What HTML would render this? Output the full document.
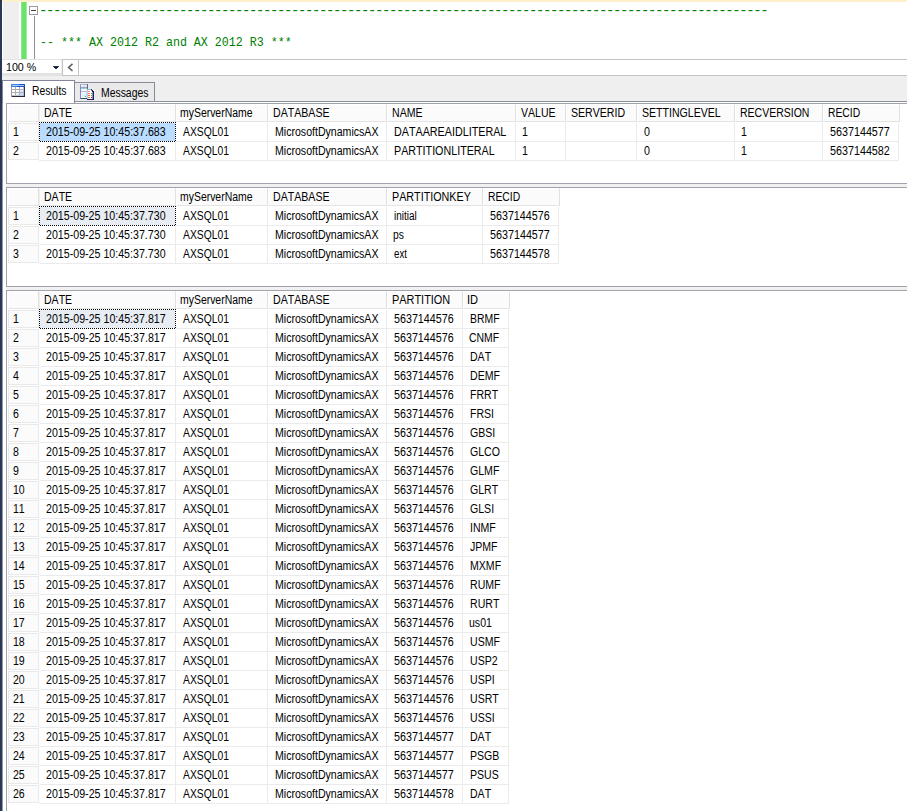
<!DOCTYPE html>
<html><head><meta charset="utf-8"><title>Results</title><style>

html,body{margin:0;padding:0;}
body{width:907px;height:811px;overflow:hidden;background:#fff;position:relative;font-family:"Liberation Sans",sans-serif;font-size:11px;color:#000;}
div{position:absolute;box-sizing:border-box;}
.t{white-space:pre;font-size:12px;line-height:14px;height:14px;font-kerning:none;transform-origin:0 0;}
.h{background:#fbfbfb;border-right:1px solid #dfdfdf;border-bottom:1px solid #e4e4e4;border-top:1px solid #fff;border-left:1px solid #fff;}
.c{border-right:1px solid #ebebeb;border-bottom:1px solid #ebebeb;}
.rh{background:#fbfbfb;border:1px solid #e9e9e9;}
.mono{font-family:"Liberation Mono",monospace;font-size:12.2px;color:#008000;white-space:pre;line-height:15px;transform-origin:0 0;transform:scaleX(0.9563);}

</style></head><body>
<div style="left:0;top:0;width:2px;height:811px;background:#293955"></div>
<div style="left:2px;top:0;width:905px;height:2px;background:#fff0cc"></div>
<div style="left:3px;top:2px;width:16px;height:57px;background:#efefef"></div>
<div style="left:21px;top:2px;width:6px;height:57px;background:#6be36b;border-left:1px solid #8ae98a;border-right:1px solid #9aec9a"></div>
<div style="left:29px;top:6px;width:9px;height:9px;border:1px solid #9a9a9a;background:#fff"></div>
<div style="left:31px;top:10px;width:5px;height:1px;background:#444"></div>
<div style="left:34px;top:16px;width:1px;height:43px;background:#909090"></div>
<div class="mono" style="left:39px;top:4px;font-size:14px;letter-spacing:-1.4px;transform:none">--------------------------------------------------------------------------------------------------------</div>
<div class="mono" style="left:39.5px;top:36px">-- *** AX 2012 R2 and AX 2012 R3 ***</div>
<div style="left:2px;top:59px;width:905px;height:1px;background:#e4e4e4"></div>
<div style="left:2px;top:60px;width:60px;height:13px;background:#fff"></div>
<div class="t" style="left:5.5px;top:60px;font-size:11px;line-height:14px;transform:scaleX(0.97)">100 %</div>
<div style="left:53px;top:66px;width:6px;height:1px;background:#2a3552"></div><div style="left:54px;top:67px;width:4px;height:1px;background:#0e1a38"></div><div style="left:55px;top:68px;width:2px;height:1px;background:#27324f"></div>
<div style="left:61px;top:60px;width:1px;height:13px;background:#f0f0f0"></div>
<div style="left:2px;top:73px;width:905px;height:28px;background:#efefef"></div>
<div style="left:2px;top:73px;width:60px;height:3px;background:#e2e2e2"></div>
<div style="left:62px;top:59px;width:17px;height:17px;border:1px solid #c3c3c3;background:#fff"></div>
<svg style="position:absolute;left:67px;top:63px" width="7" height="9"><path d="M5.5 0.8L1.6 4.4L5.5 8" fill="none" stroke="#626262" stroke-width="1.6"/></svg>
<div style="left:78px;top:59px;width:829px;height:17px;border-top:1px solid #c3c3c3;border-bottom:1px solid #c3c3c3;border-left:1px solid #c3c3c3;background:#fff"></div>
<div style="left:2px;top:102px;width:905px;height:1px;background:#fff"></div>
<div style="left:74px;top:82px;width:81px;height:20px;border:1px solid #878a98;border-bottom:none;background:#eaeaea"></div>
<div style="left:2px;top:101px;width:905px;height:1px;background:#8b8e9b"></div>
<div style="left:2px;top:80px;width:73px;height:23px;border:1px solid #83869a;border-bottom:none;background:#fff"></div>
<div class="t" style="left:32.2px;top:84px;transform:scaleX(0.861)">Results</div>
<div class="t" style="left:101.4px;top:86px;transform:scaleX(0.867)">Messages</div>
<svg style="position:absolute;left:11px;top:84px" width="14" height="13" shape-rendering="crispEdges"><rect x="0" y="0" width="14" height="13" fill="#adadb2"/><rect x="0" y="0" width="8" height="3" fill="#3f86dc"/><rect x="8" y="0" width="6" height="3" fill="#2152cc"/><rect x="6" y="2" width="8" height="1" fill="#1f4fc9"/><rect x="1" y="1" width="12" height="1" fill="#a3c4ff"/><rect x="1" y="3" width="3" height="2" fill="#ffffff"/><rect x="5" y="3" width="3" height="2" fill="#ffffff"/><rect x="9" y="3" width="3" height="2" fill="#ffffff"/><rect x="1" y="6" width="3" height="2" fill="#ffffff"/><rect x="5" y="6" width="3" height="2" fill="#ffffff"/><rect x="9" y="6" width="3" height="2" fill="#ffffff"/><rect x="1" y="9" width="3" height="2" fill="#ffffff"/><rect x="5" y="9" width="3" height="2" fill="#ffffff"/><rect x="9" y="9" width="3" height="2" fill="#ffffff"/><rect x="9" y="6" width="3" height="2" fill="#e3f1ff"/><rect x="10" y="7" width="2" height="1" fill="#c4e2ff"/><rect x="5" y="9" width="3" height="2" fill="#f3f9ff"/><rect x="7" y="10" width="1" height="1" fill="#cfe8ff"/><rect x="9" y="9" width="3" height="2" fill="#c4e2ff"/><rect x="1" y="11" width="11" height="1" fill="#c4c4cc"/><rect x="12" y="3" width="1" height="9" fill="#b6b6d2"/><rect x="13" y="3" width="1" height="10" fill="#30303e"/><rect x="1" y="12" width="13" height="1" fill="#2a2a3c"/><rect x="0" y="3" width="1" height="10" fill="#9c9cac"/></svg>
<svg style="position:absolute;left:80px;top:84px" width="14" height="16" shape-rendering="crispEdges"><rect x="0" y="0" width="8" height="15" fill="#f4f8fc"/><rect x="0" y="0" width="1" height="15" fill="#8c84d2"/><rect x="0" y="0" width="8" height="1" fill="#b4b4b8"/><rect x="7" y="0" width="1" height="6" fill="#6660aa"/><rect x="1" y="14" width="6" height="1" fill="#205058"/><rect x="0" y="14" width="1" height="1" fill="#7070b0"/><rect x="1" y="3" width="6" height="1" fill="#a4a4b0"/><rect x="1" y="4" width="6" height="1" fill="#8fd0d0"/><rect x="3" y="2" width="3" height="1" fill="#c8d0e0"/><rect x="4" y="1" width="3" height="2" fill="#d4ecff"/><rect x="1" y="7" width="5" height="1" fill="#b8b8c4"/><rect x="2" y="9" width="4" height="4" fill="#dcefff"/><rect x="3" y="8" width="3" height="2" fill="#e8f4ff"/><rect x="5" y="12" width="1" height="1" fill="#3fc83f"/><rect x="6" y="6" width="1" height="8" fill="#b8dcf4"/><rect x="7" y="5" width="7" height="11" fill="#ffffff"/><rect x="7" y="5" width="4" height="1" fill="#86c6c6"/><rect x="7" y="6" width="1" height="10" fill="#c8c8dc"/><rect x="11" y="5" width="3" height="3" fill="#ececec"/><rect x="11" y="5" width="1" height="2" fill="#2a2470"/><rect x="12" y="6" width="1" height="2" fill="#201c60"/><rect x="13" y="7" width="1" height="2" fill="#201c60"/><rect x="11" y="6" width="1" height="1" fill="#8080c0"/><rect x="13" y="8" width="1" height="8" fill="#221e62"/><rect x="7" y="15" width="7" height="1" fill="#221e62"/><rect x="12" y="8" width="1" height="7" fill="#8c88c8"/><rect x="8" y="7" width="2" height="1" fill="#ff7a6a"/><rect x="11" y="7" width="1" height="1" fill="#ffffff"/><rect x="8" y="9" width="2" height="1" fill="#ff7a3a"/><rect x="11" y="9" width="1" height="1" fill="#5a9a2a"/><rect x="8" y="11" width="2" height="1" fill="#ff5a4a"/><rect x="11" y="11" width="1" height="1" fill="#5a9a2a"/><rect x="8" y="13" width="2" height="1" fill="#ff6a2a"/><rect x="11" y="13" width="1" height="1" fill="#245a24"/></svg>
<div style="left:2px;top:103px;width:1px;height:708px;background:#9699a6"></div>
<div style="left:6px;top:103px;width:901px;height:1px;background:#a1a3ac"></div>
<div style="left:6px;top:103px;width:1px;height:81px;background:#a1a3ac"></div>
<div style="left:6px;top:183px;width:901px;height:1px;background:#a1a3ac"></div>
<div class="h" style="left:8px;top:104px;width:31px;height:18px"></div>
<div class="h" style="left:39px;top:104px;width:137px;height:18px;border-left-color:#efefef"><div class="t" style="left:3.67px;top:1px;transform:scaleX(0.8793)">DATE</div></div>
<div class="h" style="left:176px;top:104px;width:92px;height:18px"><div class="t" style="left:2.58px;top:1px;transform:scaleX(0.8698)">myServerName</div></div>
<div class="h" style="left:268px;top:104px;width:119px;height:18px"><div class="t" style="left:3.99px;top:1px;transform:scaleX(0.8836)">DATABASE</div></div>
<div class="h" style="left:387px;top:104px;width:129px;height:18px"><div class="t" style="left:3.67px;top:1px;transform:scaleX(0.8810)">NAME</div></div>
<div class="h" style="left:516px;top:104px;width:50px;height:18px"><div class="t" style="left:3.57px;top:1px;transform:scaleX(0.8767)">VALUE</div></div>
<div class="h" style="left:566px;top:104px;width:71px;height:18px"><div class="t" style="left:3.72px;top:1px;transform:scaleX(0.8804)">SERVERID</div></div>
<div class="h" style="left:637px;top:104px;width:98px;height:18px"><div class="t" style="left:3.91px;top:1px;transform:scaleX(0.8813)">SETTINGLEVEL</div></div>
<div class="h" style="left:735px;top:104px;width:88px;height:18px"><div class="t" style="left:3.86px;top:1px;transform:scaleX(0.8742)">RECVERSION</div></div>
<div class="h" style="left:823px;top:104px;width:77px;height:18px"><div class="t" style="left:3.53px;top:1px;transform:scaleX(0.8619)">RECID</div></div>
<div class="rh" style="left:8px;top:123px;width:31px;height:18px"><div class="t" style="left:3.50px;top:1px;transform:scaleX(0.8800)">1</div></div>
<div style="left:40px;top:123px;width:135px;height:18px;background:#b9dcff"></div>
<div style="left:39px;top:122px;width:137px;height:1px;background:repeating-linear-gradient(90deg,#000 0 1px,transparent 1px 2px)"></div>
<div style="left:39px;top:141px;width:137px;height:1px;background:repeating-linear-gradient(90deg,transparent 0 1px,#000 1px 2px)"></div>
<div style="left:39px;top:122px;width:1px;height:20px;background:repeating-linear-gradient(180deg,#000 0 1px,transparent 1px 2px)"></div>
<div style="left:175px;top:122px;width:1px;height:20px;background:repeating-linear-gradient(180deg,#000 0 1px,transparent 1px 2px)"></div>
<div class="t" style="left:45.95px;top:125px;transform:scaleX(0.8880)">2015-09-25 10:45:37.683</div>
<div class="c" style="left:176px;top:123px;width:92px;height:19px"><div class="t" style="left:6.53px;top:2px;transform:scaleX(0.8617)">AXSQL01</div></div>
<div class="c" style="left:268px;top:123px;width:119px;height:19px"><div class="t" style="left:6.62px;top:2px;transform:scaleX(0.8817)">MicrosoftDynamicsAX</div></div>
<div class="c" style="left:387px;top:123px;width:129px;height:19px"><div class="t" style="left:6.89px;top:2px;transform:scaleX(0.8962)">DATAAREAIDLITERAL</div></div>
<div class="c" style="left:516px;top:123px;width:50px;height:19px"><div class="t" style="left:6.38px;top:2px;transform:scaleX(0.8829)">1</div></div>
<div class="c" style="left:566px;top:123px;width:71px;height:19px"><div class="t" style="left:6.70px;top:2px;transform:scaleX(0.8800)"></div></div>
<div class="c" style="left:637px;top:123px;width:98px;height:19px"><div class="t" style="left:6.66px;top:2px;transform:scaleX(0.8900)">0</div></div>
<div class="c" style="left:735px;top:123px;width:88px;height:19px"><div class="t" style="left:6.38px;top:2px;transform:scaleX(0.8829)">1</div></div>
<div class="c" style="left:823px;top:123px;width:76px;height:19px"><div class="t" style="left:6.50px;top:2px;transform:scaleX(0.8963)">5637144577</div></div>
<div class="rh" style="left:8px;top:142px;width:31px;height:18px"><div class="t" style="left:3.50px;top:1px;transform:scaleX(0.8800)">2</div></div>
<div class="c" style="left:39px;top:142px;width:137px;height:19px"><div class="t" style="left:6.95px;top:2px;transform:scaleX(0.8880)">2015-09-25 10:45:37.683</div></div>
<div class="c" style="left:176px;top:142px;width:92px;height:19px"><div class="t" style="left:6.53px;top:2px;transform:scaleX(0.8617)">AXSQL01</div></div>
<div class="c" style="left:268px;top:142px;width:119px;height:19px"><div class="t" style="left:6.62px;top:2px;transform:scaleX(0.8817)">MicrosoftDynamicsAX</div></div>
<div class="c" style="left:387px;top:142px;width:129px;height:19px"><div class="t" style="left:6.89px;top:2px;transform:scaleX(0.8937)">PARTITIONLITERAL</div></div>
<div class="c" style="left:516px;top:142px;width:50px;height:19px"><div class="t" style="left:6.38px;top:2px;transform:scaleX(0.8829)">1</div></div>
<div class="c" style="left:566px;top:142px;width:71px;height:19px"><div class="t" style="left:6.70px;top:2px;transform:scaleX(0.8800)"></div></div>
<div class="c" style="left:637px;top:142px;width:98px;height:19px"><div class="t" style="left:6.66px;top:2px;transform:scaleX(0.8900)">0</div></div>
<div class="c" style="left:735px;top:142px;width:88px;height:19px"><div class="t" style="left:6.38px;top:2px;transform:scaleX(0.8829)">1</div></div>
<div class="c" style="left:823px;top:142px;width:76px;height:19px"><div class="t" style="left:6.50px;top:2px;transform:scaleX(0.8963)">5637144582</div></div>
<div style="left:6px;top:184px;width:901px;height:3px;background:#f1f1f1"></div>
<div style="left:6px;top:187px;width:901px;height:1px;background:#a1a3ac"></div>
<div style="left:6px;top:187px;width:1px;height:100px;background:#a1a3ac"></div>
<div style="left:6px;top:286px;width:901px;height:1px;background:#a1a3ac"></div>
<div class="h" style="left:8px;top:188px;width:31px;height:18px"></div>
<div class="h" style="left:39px;top:188px;width:137px;height:18px;border-left-color:#efefef"><div class="t" style="left:3.67px;top:1px;transform:scaleX(0.8793)">DATE</div></div>
<div class="h" style="left:176px;top:188px;width:92px;height:18px"><div class="t" style="left:2.58px;top:1px;transform:scaleX(0.8698)">myServerName</div></div>
<div class="h" style="left:268px;top:188px;width:119px;height:18px"><div class="t" style="left:3.99px;top:1px;transform:scaleX(0.8836)">DATABASE</div></div>
<div class="h" style="left:387px;top:188px;width:96px;height:18px"><div class="t" style="left:3.62px;top:1px;transform:scaleX(0.8962)">PARTITIONKEY</div></div>
<div class="h" style="left:483px;top:188px;width:77px;height:18px"><div class="t" style="left:3.53px;top:1px;transform:scaleX(0.8619)">RECID</div></div>
<div class="rh" style="left:8px;top:207px;width:31px;height:18px"><div class="t" style="left:3.50px;top:1px;transform:scaleX(0.8800)">1</div></div>
<div style="left:40px;top:207px;width:135px;height:18px;background:#e8edf3"></div>
<div style="left:39px;top:206px;width:137px;height:1px;background:repeating-linear-gradient(90deg,#000 0 1px,transparent 1px 2px)"></div>
<div style="left:39px;top:225px;width:137px;height:1px;background:repeating-linear-gradient(90deg,transparent 0 1px,#000 1px 2px)"></div>
<div style="left:39px;top:206px;width:1px;height:20px;background:repeating-linear-gradient(180deg,#000 0 1px,transparent 1px 2px)"></div>
<div style="left:175px;top:206px;width:1px;height:20px;background:repeating-linear-gradient(180deg,#000 0 1px,transparent 1px 2px)"></div>
<div class="t" style="left:45.96px;top:209px;transform:scaleX(0.8870)">2015-09-25 10:45:37.730</div>
<div class="c" style="left:176px;top:207px;width:92px;height:19px"><div class="t" style="left:6.53px;top:2px;transform:scaleX(0.8617)">AXSQL01</div></div>
<div class="c" style="left:268px;top:207px;width:119px;height:19px"><div class="t" style="left:6.62px;top:2px;transform:scaleX(0.8817)">MicrosoftDynamicsAX</div></div>
<div class="c" style="left:387px;top:207px;width:96px;height:19px"><div class="t" style="left:6.88px;top:2px;transform:scaleX(0.8338)">initial</div></div>
<div class="c" style="left:483px;top:207px;width:76px;height:19px"><div class="t" style="left:6.65px;top:2px;transform:scaleX(0.8928)">5637144576</div></div>
<div class="rh" style="left:8px;top:226px;width:31px;height:18px"><div class="t" style="left:3.50px;top:1px;transform:scaleX(0.8800)">2</div></div>
<div class="c" style="left:39px;top:226px;width:137px;height:19px"><div class="t" style="left:6.96px;top:2px;transform:scaleX(0.8870)">2015-09-25 10:45:37.730</div></div>
<div class="c" style="left:176px;top:226px;width:92px;height:19px"><div class="t" style="left:6.53px;top:2px;transform:scaleX(0.8617)">AXSQL01</div></div>
<div class="c" style="left:268px;top:226px;width:119px;height:19px"><div class="t" style="left:6.62px;top:2px;transform:scaleX(0.8817)">MicrosoftDynamicsAX</div></div>
<div class="c" style="left:387px;top:226px;width:96px;height:19px"><div class="t" style="left:5.60px;top:2px;transform:scaleX(0.8597)">ps</div></div>
<div class="c" style="left:483px;top:226px;width:76px;height:19px"><div class="t" style="left:6.50px;top:2px;transform:scaleX(0.8963)">5637144577</div></div>
<div class="rh" style="left:8px;top:245px;width:31px;height:18px"><div class="t" style="left:3.50px;top:1px;transform:scaleX(0.8800)">3</div></div>
<div class="c" style="left:39px;top:245px;width:137px;height:19px"><div class="t" style="left:6.96px;top:2px;transform:scaleX(0.8870)">2015-09-25 10:45:37.730</div></div>
<div class="c" style="left:176px;top:245px;width:92px;height:19px"><div class="t" style="left:6.53px;top:2px;transform:scaleX(0.8617)">AXSQL01</div></div>
<div class="c" style="left:268px;top:245px;width:119px;height:19px"><div class="t" style="left:6.62px;top:2px;transform:scaleX(0.8817)">MicrosoftDynamicsAX</div></div>
<div class="c" style="left:387px;top:245px;width:96px;height:19px"><div class="t" style="left:6.91px;top:2px;transform:scaleX(0.8076)">ext</div></div>
<div class="c" style="left:483px;top:245px;width:76px;height:19px"><div class="t" style="left:6.66px;top:2px;transform:scaleX(0.8951)">5637144578</div></div>
<div style="left:6px;top:287px;width:901px;height:3px;background:#f1f1f1"></div>
<div style="left:6px;top:290px;width:901px;height:1px;background:#a1a3ac"></div>
<div style="left:6px;top:290px;width:1px;height:521px;background:#a1a3ac"></div>
<div class="h" style="left:8px;top:291px;width:31px;height:18px"></div>
<div class="h" style="left:39px;top:291px;width:137px;height:18px;border-left-color:#efefef"><div class="t" style="left:3.67px;top:1px;transform:scaleX(0.8793)">DATE</div></div>
<div class="h" style="left:176px;top:291px;width:92px;height:18px"><div class="t" style="left:2.58px;top:1px;transform:scaleX(0.8698)">myServerName</div></div>
<div class="h" style="left:268px;top:291px;width:119px;height:18px"><div class="t" style="left:3.99px;top:1px;transform:scaleX(0.8836)">DATABASE</div></div>
<div class="h" style="left:387px;top:291px;width:76px;height:18px"><div class="t" style="left:3.82px;top:1px;transform:scaleX(0.9099)">PARTITION</div></div>
<div class="h" style="left:463px;top:291px;width:47px;height:18px"><div class="t" style="left:3.16px;top:1px;transform:scaleX(0.9240)">ID</div></div>
<div class="rh" style="left:8px;top:310px;width:31px;height:18px"><div class="t" style="left:3.50px;top:1px;transform:scaleX(0.8800)">1</div></div>
<div style="left:40px;top:310px;width:135px;height:18px;background:#e8edf3"></div>
<div style="left:39px;top:309px;width:137px;height:1px;background:repeating-linear-gradient(90deg,#000 0 1px,transparent 1px 2px)"></div>
<div style="left:39px;top:328px;width:137px;height:1px;background:repeating-linear-gradient(90deg,transparent 0 1px,#000 1px 2px)"></div>
<div style="left:39px;top:309px;width:1px;height:20px;background:repeating-linear-gradient(180deg,#000 0 1px,transparent 1px 2px)"></div>
<div style="left:175px;top:309px;width:1px;height:20px;background:repeating-linear-gradient(180deg,#000 0 1px,transparent 1px 2px)"></div>
<div class="t" style="left:45.98px;top:312px;transform:scaleX(0.8878)">2015-09-25 10:45:37.817</div>
<div class="c" style="left:176px;top:310px;width:92px;height:19px"><div class="t" style="left:6.53px;top:2px;transform:scaleX(0.8617)">AXSQL01</div></div>
<div class="c" style="left:268px;top:310px;width:119px;height:19px"><div class="t" style="left:6.62px;top:2px;transform:scaleX(0.8817)">MicrosoftDynamicsAX</div></div>
<div class="c" style="left:387px;top:310px;width:76px;height:19px"><div class="t" style="left:6.65px;top:2px;transform:scaleX(0.8928)">5637144576</div></div>
<div class="c" style="left:463px;top:310px;width:46px;height:19px"><div class="t" style="left:6.85px;top:2px;transform:scaleX(0.8696)">BRMF</div></div>
<div class="rh" style="left:8px;top:329px;width:31px;height:18px"><div class="t" style="left:3.50px;top:1px;transform:scaleX(0.8800)">2</div></div>
<div class="c" style="left:39px;top:329px;width:137px;height:19px"><div class="t" style="left:6.98px;top:2px;transform:scaleX(0.8878)">2015-09-25 10:45:37.817</div></div>
<div class="c" style="left:176px;top:329px;width:92px;height:19px"><div class="t" style="left:6.53px;top:2px;transform:scaleX(0.8617)">AXSQL01</div></div>
<div class="c" style="left:268px;top:329px;width:119px;height:19px"><div class="t" style="left:6.62px;top:2px;transform:scaleX(0.8817)">MicrosoftDynamicsAX</div></div>
<div class="c" style="left:387px;top:329px;width:76px;height:19px"><div class="t" style="left:6.65px;top:2px;transform:scaleX(0.8928)">5637144576</div></div>
<div class="c" style="left:463px;top:329px;width:46px;height:19px"><div class="t" style="left:6.44px;top:2px;transform:scaleX(0.8685)">CNMF</div></div>
<div class="rh" style="left:8px;top:348px;width:31px;height:18px"><div class="t" style="left:3.50px;top:1px;transform:scaleX(0.8800)">3</div></div>
<div class="c" style="left:39px;top:348px;width:137px;height:19px"><div class="t" style="left:6.98px;top:2px;transform:scaleX(0.8878)">2015-09-25 10:45:37.817</div></div>
<div class="c" style="left:176px;top:348px;width:92px;height:19px"><div class="t" style="left:6.53px;top:2px;transform:scaleX(0.8617)">AXSQL01</div></div>
<div class="c" style="left:268px;top:348px;width:119px;height:19px"><div class="t" style="left:6.62px;top:2px;transform:scaleX(0.8817)">MicrosoftDynamicsAX</div></div>
<div class="c" style="left:387px;top:348px;width:76px;height:19px"><div class="t" style="left:6.65px;top:2px;transform:scaleX(0.8928)">5637144576</div></div>
<div class="c" style="left:463px;top:348px;width:46px;height:19px"><div class="t" style="left:6.85px;top:2px;transform:scaleX(0.8779)">DAT</div></div>
<div class="rh" style="left:8px;top:367px;width:31px;height:18px"><div class="t" style="left:3.50px;top:1px;transform:scaleX(0.8800)">4</div></div>
<div class="c" style="left:39px;top:367px;width:137px;height:19px"><div class="t" style="left:6.98px;top:2px;transform:scaleX(0.8878)">2015-09-25 10:45:37.817</div></div>
<div class="c" style="left:176px;top:367px;width:92px;height:19px"><div class="t" style="left:6.53px;top:2px;transform:scaleX(0.8617)">AXSQL01</div></div>
<div class="c" style="left:268px;top:367px;width:119px;height:19px"><div class="t" style="left:6.62px;top:2px;transform:scaleX(0.8817)">MicrosoftDynamicsAX</div></div>
<div class="c" style="left:387px;top:367px;width:76px;height:19px"><div class="t" style="left:6.65px;top:2px;transform:scaleX(0.8928)">5637144576</div></div>
<div class="c" style="left:463px;top:367px;width:46px;height:19px"><div class="t" style="left:6.70px;top:2px;transform:scaleX(0.8800)">DEMF</div></div>
<div class="rh" style="left:8px;top:386px;width:31px;height:18px"><div class="t" style="left:3.50px;top:1px;transform:scaleX(0.8800)">5</div></div>
<div class="c" style="left:39px;top:386px;width:137px;height:19px"><div class="t" style="left:6.98px;top:2px;transform:scaleX(0.8878)">2015-09-25 10:45:37.817</div></div>
<div class="c" style="left:176px;top:386px;width:92px;height:19px"><div class="t" style="left:6.53px;top:2px;transform:scaleX(0.8617)">AXSQL01</div></div>
<div class="c" style="left:268px;top:386px;width:119px;height:19px"><div class="t" style="left:6.62px;top:2px;transform:scaleX(0.8817)">MicrosoftDynamicsAX</div></div>
<div class="c" style="left:387px;top:386px;width:76px;height:19px"><div class="t" style="left:6.65px;top:2px;transform:scaleX(0.8928)">5637144576</div></div>
<div class="c" style="left:463px;top:386px;width:46px;height:19px"><div class="t" style="left:6.70px;top:2px;transform:scaleX(0.8800)">FRRT</div></div>
<div class="rh" style="left:8px;top:405px;width:31px;height:18px"><div class="t" style="left:3.50px;top:1px;transform:scaleX(0.8800)">6</div></div>
<div class="c" style="left:39px;top:405px;width:137px;height:19px"><div class="t" style="left:6.98px;top:2px;transform:scaleX(0.8878)">2015-09-25 10:45:37.817</div></div>
<div class="c" style="left:176px;top:405px;width:92px;height:19px"><div class="t" style="left:6.53px;top:2px;transform:scaleX(0.8617)">AXSQL01</div></div>
<div class="c" style="left:268px;top:405px;width:119px;height:19px"><div class="t" style="left:6.62px;top:2px;transform:scaleX(0.8817)">MicrosoftDynamicsAX</div></div>
<div class="c" style="left:387px;top:405px;width:76px;height:19px"><div class="t" style="left:6.65px;top:2px;transform:scaleX(0.8928)">5637144576</div></div>
<div class="c" style="left:463px;top:405px;width:46px;height:19px"><div class="t" style="left:6.70px;top:2px;transform:scaleX(0.8800)">FRSI</div></div>
<div class="rh" style="left:8px;top:424px;width:31px;height:18px"><div class="t" style="left:3.50px;top:1px;transform:scaleX(0.8800)">7</div></div>
<div class="c" style="left:39px;top:424px;width:137px;height:19px"><div class="t" style="left:6.98px;top:2px;transform:scaleX(0.8878)">2015-09-25 10:45:37.817</div></div>
<div class="c" style="left:176px;top:424px;width:92px;height:19px"><div class="t" style="left:6.53px;top:2px;transform:scaleX(0.8617)">AXSQL01</div></div>
<div class="c" style="left:268px;top:424px;width:119px;height:19px"><div class="t" style="left:6.62px;top:2px;transform:scaleX(0.8817)">MicrosoftDynamicsAX</div></div>
<div class="c" style="left:387px;top:424px;width:76px;height:19px"><div class="t" style="left:6.65px;top:2px;transform:scaleX(0.8928)">5637144576</div></div>
<div class="c" style="left:463px;top:424px;width:46px;height:19px"><div class="t" style="left:6.70px;top:2px;transform:scaleX(0.8800)">GBSI</div></div>
<div class="rh" style="left:8px;top:443px;width:31px;height:18px"><div class="t" style="left:3.50px;top:1px;transform:scaleX(0.8800)">8</div></div>
<div class="c" style="left:39px;top:443px;width:137px;height:19px"><div class="t" style="left:6.98px;top:2px;transform:scaleX(0.8878)">2015-09-25 10:45:37.817</div></div>
<div class="c" style="left:176px;top:443px;width:92px;height:19px"><div class="t" style="left:6.53px;top:2px;transform:scaleX(0.8617)">AXSQL01</div></div>
<div class="c" style="left:268px;top:443px;width:119px;height:19px"><div class="t" style="left:6.62px;top:2px;transform:scaleX(0.8817)">MicrosoftDynamicsAX</div></div>
<div class="c" style="left:387px;top:443px;width:76px;height:19px"><div class="t" style="left:6.65px;top:2px;transform:scaleX(0.8928)">5637144576</div></div>
<div class="c" style="left:463px;top:443px;width:46px;height:19px"><div class="t" style="left:6.70px;top:2px;transform:scaleX(0.8800)">GLCO</div></div>
<div class="rh" style="left:8px;top:462px;width:31px;height:18px"><div class="t" style="left:3.50px;top:1px;transform:scaleX(0.8800)">9</div></div>
<div class="c" style="left:39px;top:462px;width:137px;height:19px"><div class="t" style="left:6.98px;top:2px;transform:scaleX(0.8878)">2015-09-25 10:45:37.817</div></div>
<div class="c" style="left:176px;top:462px;width:92px;height:19px"><div class="t" style="left:6.53px;top:2px;transform:scaleX(0.8617)">AXSQL01</div></div>
<div class="c" style="left:268px;top:462px;width:119px;height:19px"><div class="t" style="left:6.62px;top:2px;transform:scaleX(0.8817)">MicrosoftDynamicsAX</div></div>
<div class="c" style="left:387px;top:462px;width:76px;height:19px"><div class="t" style="left:6.65px;top:2px;transform:scaleX(0.8928)">5637144576</div></div>
<div class="c" style="left:463px;top:462px;width:46px;height:19px"><div class="t" style="left:6.70px;top:2px;transform:scaleX(0.8800)">GLMF</div></div>
<div class="rh" style="left:8px;top:481px;width:31px;height:18px"><div class="t" style="left:3.50px;top:1px;transform:scaleX(0.8800)">10</div></div>
<div class="c" style="left:39px;top:481px;width:137px;height:19px"><div class="t" style="left:6.98px;top:2px;transform:scaleX(0.8878)">2015-09-25 10:45:37.817</div></div>
<div class="c" style="left:176px;top:481px;width:92px;height:19px"><div class="t" style="left:6.53px;top:2px;transform:scaleX(0.8617)">AXSQL01</div></div>
<div class="c" style="left:268px;top:481px;width:119px;height:19px"><div class="t" style="left:6.62px;top:2px;transform:scaleX(0.8817)">MicrosoftDynamicsAX</div></div>
<div class="c" style="left:387px;top:481px;width:76px;height:19px"><div class="t" style="left:6.65px;top:2px;transform:scaleX(0.8928)">5637144576</div></div>
<div class="c" style="left:463px;top:481px;width:46px;height:19px"><div class="t" style="left:6.70px;top:2px;transform:scaleX(0.8800)">GLRT</div></div>
<div class="rh" style="left:8px;top:500px;width:31px;height:18px"><div class="t" style="left:3.50px;top:1px;transform:scaleX(0.8800)">11</div></div>
<div class="c" style="left:39px;top:500px;width:137px;height:19px"><div class="t" style="left:6.98px;top:2px;transform:scaleX(0.8878)">2015-09-25 10:45:37.817</div></div>
<div class="c" style="left:176px;top:500px;width:92px;height:19px"><div class="t" style="left:6.53px;top:2px;transform:scaleX(0.8617)">AXSQL01</div></div>
<div class="c" style="left:268px;top:500px;width:119px;height:19px"><div class="t" style="left:6.62px;top:2px;transform:scaleX(0.8817)">MicrosoftDynamicsAX</div></div>
<div class="c" style="left:387px;top:500px;width:76px;height:19px"><div class="t" style="left:6.65px;top:2px;transform:scaleX(0.8928)">5637144576</div></div>
<div class="c" style="left:463px;top:500px;width:46px;height:19px"><div class="t" style="left:6.70px;top:2px;transform:scaleX(0.8800)">GLSI</div></div>
<div class="rh" style="left:8px;top:519px;width:31px;height:18px"><div class="t" style="left:3.50px;top:1px;transform:scaleX(0.8800)">12</div></div>
<div class="c" style="left:39px;top:519px;width:137px;height:19px"><div class="t" style="left:6.98px;top:2px;transform:scaleX(0.8878)">2015-09-25 10:45:37.817</div></div>
<div class="c" style="left:176px;top:519px;width:92px;height:19px"><div class="t" style="left:6.53px;top:2px;transform:scaleX(0.8617)">AXSQL01</div></div>
<div class="c" style="left:268px;top:519px;width:119px;height:19px"><div class="t" style="left:6.62px;top:2px;transform:scaleX(0.8817)">MicrosoftDynamicsAX</div></div>
<div class="c" style="left:387px;top:519px;width:76px;height:19px"><div class="t" style="left:6.65px;top:2px;transform:scaleX(0.8928)">5637144576</div></div>
<div class="c" style="left:463px;top:519px;width:46px;height:19px"><div class="t" style="left:6.70px;top:2px;transform:scaleX(0.8800)">INMF</div></div>
<div class="rh" style="left:8px;top:538px;width:31px;height:18px"><div class="t" style="left:3.50px;top:1px;transform:scaleX(0.8800)">13</div></div>
<div class="c" style="left:39px;top:538px;width:137px;height:19px"><div class="t" style="left:6.98px;top:2px;transform:scaleX(0.8878)">2015-09-25 10:45:37.817</div></div>
<div class="c" style="left:176px;top:538px;width:92px;height:19px"><div class="t" style="left:6.53px;top:2px;transform:scaleX(0.8617)">AXSQL01</div></div>
<div class="c" style="left:268px;top:538px;width:119px;height:19px"><div class="t" style="left:6.62px;top:2px;transform:scaleX(0.8817)">MicrosoftDynamicsAX</div></div>
<div class="c" style="left:387px;top:538px;width:76px;height:19px"><div class="t" style="left:6.65px;top:2px;transform:scaleX(0.8928)">5637144576</div></div>
<div class="c" style="left:463px;top:538px;width:46px;height:19px"><div class="t" style="left:6.70px;top:2px;transform:scaleX(0.8800)">JPMF</div></div>
<div class="rh" style="left:8px;top:557px;width:31px;height:18px"><div class="t" style="left:3.50px;top:1px;transform:scaleX(0.8800)">14</div></div>
<div class="c" style="left:39px;top:557px;width:137px;height:19px"><div class="t" style="left:6.98px;top:2px;transform:scaleX(0.8878)">2015-09-25 10:45:37.817</div></div>
<div class="c" style="left:176px;top:557px;width:92px;height:19px"><div class="t" style="left:6.53px;top:2px;transform:scaleX(0.8617)">AXSQL01</div></div>
<div class="c" style="left:268px;top:557px;width:119px;height:19px"><div class="t" style="left:6.62px;top:2px;transform:scaleX(0.8817)">MicrosoftDynamicsAX</div></div>
<div class="c" style="left:387px;top:557px;width:76px;height:19px"><div class="t" style="left:6.65px;top:2px;transform:scaleX(0.8928)">5637144576</div></div>
<div class="c" style="left:463px;top:557px;width:46px;height:19px"><div class="t" style="left:6.70px;top:2px;transform:scaleX(0.8800)">MXMF</div></div>
<div class="rh" style="left:8px;top:576px;width:31px;height:18px"><div class="t" style="left:3.50px;top:1px;transform:scaleX(0.8800)">15</div></div>
<div class="c" style="left:39px;top:576px;width:137px;height:19px"><div class="t" style="left:6.98px;top:2px;transform:scaleX(0.8878)">2015-09-25 10:45:37.817</div></div>
<div class="c" style="left:176px;top:576px;width:92px;height:19px"><div class="t" style="left:6.53px;top:2px;transform:scaleX(0.8617)">AXSQL01</div></div>
<div class="c" style="left:268px;top:576px;width:119px;height:19px"><div class="t" style="left:6.62px;top:2px;transform:scaleX(0.8817)">MicrosoftDynamicsAX</div></div>
<div class="c" style="left:387px;top:576px;width:76px;height:19px"><div class="t" style="left:6.65px;top:2px;transform:scaleX(0.8928)">5637144576</div></div>
<div class="c" style="left:463px;top:576px;width:46px;height:19px"><div class="t" style="left:6.70px;top:2px;transform:scaleX(0.8800)">RUMF</div></div>
<div class="rh" style="left:8px;top:595px;width:31px;height:18px"><div class="t" style="left:3.50px;top:1px;transform:scaleX(0.8800)">16</div></div>
<div class="c" style="left:39px;top:595px;width:137px;height:19px"><div class="t" style="left:6.98px;top:2px;transform:scaleX(0.8878)">2015-09-25 10:45:37.817</div></div>
<div class="c" style="left:176px;top:595px;width:92px;height:19px"><div class="t" style="left:6.53px;top:2px;transform:scaleX(0.8617)">AXSQL01</div></div>
<div class="c" style="left:268px;top:595px;width:119px;height:19px"><div class="t" style="left:6.62px;top:2px;transform:scaleX(0.8817)">MicrosoftDynamicsAX</div></div>
<div class="c" style="left:387px;top:595px;width:76px;height:19px"><div class="t" style="left:6.65px;top:2px;transform:scaleX(0.8928)">5637144576</div></div>
<div class="c" style="left:463px;top:595px;width:46px;height:19px"><div class="t" style="left:6.70px;top:2px;transform:scaleX(0.8800)">RURT</div></div>
<div class="rh" style="left:8px;top:614px;width:31px;height:18px"><div class="t" style="left:3.50px;top:1px;transform:scaleX(0.8800)">17</div></div>
<div class="c" style="left:39px;top:614px;width:137px;height:19px"><div class="t" style="left:6.98px;top:2px;transform:scaleX(0.8878)">2015-09-25 10:45:37.817</div></div>
<div class="c" style="left:176px;top:614px;width:92px;height:19px"><div class="t" style="left:6.53px;top:2px;transform:scaleX(0.8617)">AXSQL01</div></div>
<div class="c" style="left:268px;top:614px;width:119px;height:19px"><div class="t" style="left:6.62px;top:2px;transform:scaleX(0.8817)">MicrosoftDynamicsAX</div></div>
<div class="c" style="left:387px;top:614px;width:76px;height:19px"><div class="t" style="left:6.65px;top:2px;transform:scaleX(0.8928)">5637144576</div></div>
<div class="c" style="left:463px;top:614px;width:46px;height:19px"><div class="t" style="left:5.70px;top:2px;transform:scaleX(0.8800)">us01</div></div>
<div class="rh" style="left:8px;top:633px;width:31px;height:18px"><div class="t" style="left:3.50px;top:1px;transform:scaleX(0.8800)">18</div></div>
<div class="c" style="left:39px;top:633px;width:137px;height:19px"><div class="t" style="left:6.98px;top:2px;transform:scaleX(0.8878)">2015-09-25 10:45:37.817</div></div>
<div class="c" style="left:176px;top:633px;width:92px;height:19px"><div class="t" style="left:6.53px;top:2px;transform:scaleX(0.8617)">AXSQL01</div></div>
<div class="c" style="left:268px;top:633px;width:119px;height:19px"><div class="t" style="left:6.62px;top:2px;transform:scaleX(0.8817)">MicrosoftDynamicsAX</div></div>
<div class="c" style="left:387px;top:633px;width:76px;height:19px"><div class="t" style="left:6.65px;top:2px;transform:scaleX(0.8928)">5637144576</div></div>
<div class="c" style="left:463px;top:633px;width:46px;height:19px"><div class="t" style="left:6.70px;top:2px;transform:scaleX(0.8800)">USMF</div></div>
<div class="rh" style="left:8px;top:652px;width:31px;height:18px"><div class="t" style="left:3.50px;top:1px;transform:scaleX(0.8800)">19</div></div>
<div class="c" style="left:39px;top:652px;width:137px;height:19px"><div class="t" style="left:6.98px;top:2px;transform:scaleX(0.8878)">2015-09-25 10:45:37.817</div></div>
<div class="c" style="left:176px;top:652px;width:92px;height:19px"><div class="t" style="left:6.53px;top:2px;transform:scaleX(0.8617)">AXSQL01</div></div>
<div class="c" style="left:268px;top:652px;width:119px;height:19px"><div class="t" style="left:6.62px;top:2px;transform:scaleX(0.8817)">MicrosoftDynamicsAX</div></div>
<div class="c" style="left:387px;top:652px;width:76px;height:19px"><div class="t" style="left:6.65px;top:2px;transform:scaleX(0.8928)">5637144576</div></div>
<div class="c" style="left:463px;top:652px;width:46px;height:19px"><div class="t" style="left:6.70px;top:2px;transform:scaleX(0.8800)">USP2</div></div>
<div class="rh" style="left:8px;top:671px;width:31px;height:18px"><div class="t" style="left:3.50px;top:1px;transform:scaleX(0.8800)">20</div></div>
<div class="c" style="left:39px;top:671px;width:137px;height:19px"><div class="t" style="left:6.98px;top:2px;transform:scaleX(0.8878)">2015-09-25 10:45:37.817</div></div>
<div class="c" style="left:176px;top:671px;width:92px;height:19px"><div class="t" style="left:6.53px;top:2px;transform:scaleX(0.8617)">AXSQL01</div></div>
<div class="c" style="left:268px;top:671px;width:119px;height:19px"><div class="t" style="left:6.62px;top:2px;transform:scaleX(0.8817)">MicrosoftDynamicsAX</div></div>
<div class="c" style="left:387px;top:671px;width:76px;height:19px"><div class="t" style="left:6.65px;top:2px;transform:scaleX(0.8928)">5637144576</div></div>
<div class="c" style="left:463px;top:671px;width:46px;height:19px"><div class="t" style="left:6.70px;top:2px;transform:scaleX(0.8800)">USPI</div></div>
<div class="rh" style="left:8px;top:690px;width:31px;height:18px"><div class="t" style="left:3.50px;top:1px;transform:scaleX(0.8800)">21</div></div>
<div class="c" style="left:39px;top:690px;width:137px;height:19px"><div class="t" style="left:6.98px;top:2px;transform:scaleX(0.8878)">2015-09-25 10:45:37.817</div></div>
<div class="c" style="left:176px;top:690px;width:92px;height:19px"><div class="t" style="left:6.53px;top:2px;transform:scaleX(0.8617)">AXSQL01</div></div>
<div class="c" style="left:268px;top:690px;width:119px;height:19px"><div class="t" style="left:6.62px;top:2px;transform:scaleX(0.8817)">MicrosoftDynamicsAX</div></div>
<div class="c" style="left:387px;top:690px;width:76px;height:19px"><div class="t" style="left:6.65px;top:2px;transform:scaleX(0.8928)">5637144576</div></div>
<div class="c" style="left:463px;top:690px;width:46px;height:19px"><div class="t" style="left:6.70px;top:2px;transform:scaleX(0.8800)">USRT</div></div>
<div class="rh" style="left:8px;top:709px;width:31px;height:18px"><div class="t" style="left:3.50px;top:1px;transform:scaleX(0.8800)">22</div></div>
<div class="c" style="left:39px;top:709px;width:137px;height:19px"><div class="t" style="left:6.98px;top:2px;transform:scaleX(0.8878)">2015-09-25 10:45:37.817</div></div>
<div class="c" style="left:176px;top:709px;width:92px;height:19px"><div class="t" style="left:6.53px;top:2px;transform:scaleX(0.8617)">AXSQL01</div></div>
<div class="c" style="left:268px;top:709px;width:119px;height:19px"><div class="t" style="left:6.62px;top:2px;transform:scaleX(0.8817)">MicrosoftDynamicsAX</div></div>
<div class="c" style="left:387px;top:709px;width:76px;height:19px"><div class="t" style="left:6.65px;top:2px;transform:scaleX(0.8928)">5637144576</div></div>
<div class="c" style="left:463px;top:709px;width:46px;height:19px"><div class="t" style="left:6.70px;top:2px;transform:scaleX(0.8800)">USSI</div></div>
<div class="rh" style="left:8px;top:728px;width:31px;height:18px"><div class="t" style="left:3.50px;top:1px;transform:scaleX(0.8800)">23</div></div>
<div class="c" style="left:39px;top:728px;width:137px;height:19px"><div class="t" style="left:6.98px;top:2px;transform:scaleX(0.8878)">2015-09-25 10:45:37.817</div></div>
<div class="c" style="left:176px;top:728px;width:92px;height:19px"><div class="t" style="left:6.53px;top:2px;transform:scaleX(0.8617)">AXSQL01</div></div>
<div class="c" style="left:268px;top:728px;width:119px;height:19px"><div class="t" style="left:6.62px;top:2px;transform:scaleX(0.8817)">MicrosoftDynamicsAX</div></div>
<div class="c" style="left:387px;top:728px;width:76px;height:19px"><div class="t" style="left:6.50px;top:2px;transform:scaleX(0.8963)">5637144577</div></div>
<div class="c" style="left:463px;top:728px;width:46px;height:19px"><div class="t" style="left:6.85px;top:2px;transform:scaleX(0.8779)">DAT</div></div>
<div class="rh" style="left:8px;top:747px;width:31px;height:18px"><div class="t" style="left:3.50px;top:1px;transform:scaleX(0.8800)">24</div></div>
<div class="c" style="left:39px;top:747px;width:137px;height:19px"><div class="t" style="left:6.98px;top:2px;transform:scaleX(0.8878)">2015-09-25 10:45:37.817</div></div>
<div class="c" style="left:176px;top:747px;width:92px;height:19px"><div class="t" style="left:6.53px;top:2px;transform:scaleX(0.8617)">AXSQL01</div></div>
<div class="c" style="left:268px;top:747px;width:119px;height:19px"><div class="t" style="left:6.62px;top:2px;transform:scaleX(0.8817)">MicrosoftDynamicsAX</div></div>
<div class="c" style="left:387px;top:747px;width:76px;height:19px"><div class="t" style="left:6.50px;top:2px;transform:scaleX(0.8963)">5637144577</div></div>
<div class="c" style="left:463px;top:747px;width:46px;height:19px"><div class="t" style="left:6.70px;top:2px;transform:scaleX(0.8800)">PSGB</div></div>
<div class="rh" style="left:8px;top:766px;width:31px;height:18px"><div class="t" style="left:3.50px;top:1px;transform:scaleX(0.8800)">25</div></div>
<div class="c" style="left:39px;top:766px;width:137px;height:19px"><div class="t" style="left:6.98px;top:2px;transform:scaleX(0.8878)">2015-09-25 10:45:37.817</div></div>
<div class="c" style="left:176px;top:766px;width:92px;height:19px"><div class="t" style="left:6.53px;top:2px;transform:scaleX(0.8617)">AXSQL01</div></div>
<div class="c" style="left:268px;top:766px;width:119px;height:19px"><div class="t" style="left:6.62px;top:2px;transform:scaleX(0.8817)">MicrosoftDynamicsAX</div></div>
<div class="c" style="left:387px;top:766px;width:76px;height:19px"><div class="t" style="left:6.50px;top:2px;transform:scaleX(0.8963)">5637144577</div></div>
<div class="c" style="left:463px;top:766px;width:46px;height:19px"><div class="t" style="left:6.70px;top:2px;transform:scaleX(0.8800)">PSUS</div></div>
<div class="rh" style="left:8px;top:785px;width:31px;height:18px"><div class="t" style="left:3.50px;top:1px;transform:scaleX(0.8800)">26</div></div>
<div class="c" style="left:39px;top:785px;width:137px;height:19px"><div class="t" style="left:6.98px;top:2px;transform:scaleX(0.8878)">2015-09-25 10:45:37.817</div></div>
<div class="c" style="left:176px;top:785px;width:92px;height:19px"><div class="t" style="left:6.53px;top:2px;transform:scaleX(0.8617)">AXSQL01</div></div>
<div class="c" style="left:268px;top:785px;width:119px;height:19px"><div class="t" style="left:6.62px;top:2px;transform:scaleX(0.8817)">MicrosoftDynamicsAX</div></div>
<div class="c" style="left:387px;top:785px;width:76px;height:19px"><div class="t" style="left:6.66px;top:2px;transform:scaleX(0.8951)">5637144578</div></div>
<div class="c" style="left:463px;top:785px;width:46px;height:19px"><div class="t" style="left:6.85px;top:2px;transform:scaleX(0.8779)">DAT</div></div>
</body></html>
